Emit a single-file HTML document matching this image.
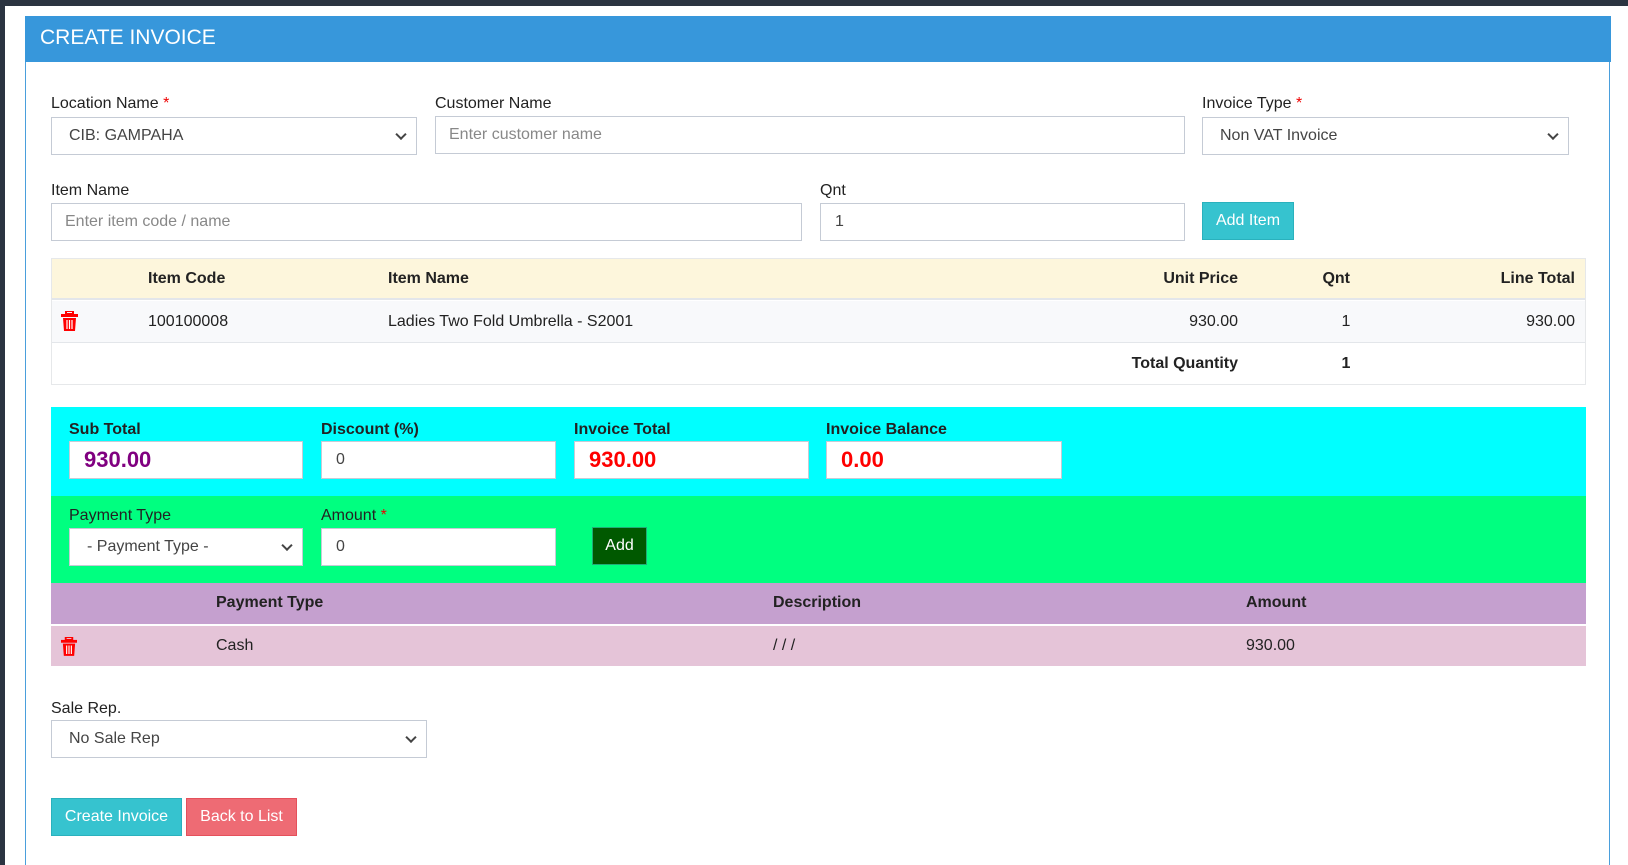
<!DOCTYPE html>
<html><head><meta charset="utf-8"><style>
*{box-sizing:border-box;margin:0;padding:0}
html{background:#fff;width:1628px;height:865px;overflow:hidden}
body{width:1628px;height:865px;background:#fff;font-family:"Liberation Sans",Arial,sans-serif;font-size:16px;color:#222;position:relative;overflow:hidden}
.a{position:absolute}
#topbar{left:0;top:0;width:1628px;height:6px;background:#2b3441}
#leftbar{left:0;top:0;width:5px;height:865px;background:#2b3441}
#panel{left:25px;top:16px;width:1585px;height:849px;border-left:1px solid #4a9fdc;border-right:1px solid #4a9fdc;background:#fff}
#hdr{left:25px;top:16px;width:1586px;height:46px;background:#3797db;color:#fff;font-size:21px;padding:10px 0 0 15px}
.lbl{font-size:16px;color:#222}
.req{color:#e00}
.inp{border:1px solid #c5cbd5;background:#fff;font-size:16px;color:#444;padding:0 0 0 17px;display:flex;align-items:center}
.ph{color:#888;padding-left:13px}
.sel::after{content:"";position:absolute;right:11px;top:50%;width:6px;height:6px;border-right:2px solid #444;border-bottom:2px solid #444;transform:translateY(-70%) rotate(45deg)}
.btn{color:#fff;display:flex;align-items:center;justify-content:center;font-size:16px}
.b{font-weight:bold}
.big{font-size:22px;font-weight:bold}
</style></head><body>
<div class="a" id="topbar"></div>
<div class="a" id="leftbar"></div>
<div class="a" id="panel"></div>
<div class="a" id="hdr">CREATE INVOICE</div>

<div class="a lbl" style="left:51px;top:95px">Location Name <span class="req">*</span></div>
<div class="a inp sel" style="left:51px;top:117px;width:366px;height:38px">CIB: GAMPAHA</div>
<div class="a lbl" style="left:435px;top:95px">Customer Name</div>
<div class="a inp ph" style="left:435px;top:116px;width:750px;height:38px">Enter customer name</div>
<div class="a lbl" style="left:1202px;top:95px">Invoice Type <span class="req">*</span></div>
<div class="a inp sel" style="left:1202px;top:117px;width:367px;height:38px">Non VAT Invoice</div>

<div class="a lbl" style="left:51px;top:182px">Item Name</div>
<div class="a inp ph" style="left:51px;top:203px;width:751px;height:38px">Enter item code / name</div>
<div class="a lbl" style="left:820px;top:182px">Qnt</div>
<div class="a inp" style="left:820px;top:203px;width:365px;height:38px;padding-left:14px">1</div>
<div class="a btn" style="left:1202px;top:202px;width:92px;height:38px;background:#36c3cf;border:1px solid #2ab1bd">Add Item</div>

<div class="a" style="left:51px;top:258px;width:1535px;height:127px;border:1px solid #e6e8ea"></div>
<div class="a" style="left:52px;top:259px;width:1533px;height:41px;background:#fdf6dc;border-bottom:2px solid #e3e6ea"></div>
<div class="a b" style="left:148px;top:270px">Item Code</div>
<div class="a b" style="left:388px;top:270px">Item Name</div>
<div class="a b" style="left:1138px;top:270px;width:100px;text-align:right">Unit Price</div>
<div class="a b" style="left:1300px;top:270px;width:50px;text-align:right">Qnt</div>
<div class="a b" style="left:1475px;top:270px;width:100px;text-align:right">Line Total</div>
<div class="a" style="left:52px;top:301px;width:1533px;height:42px;background:#f8f9fb;border-bottom:1px solid #e3e6ea"></div>
<svg class="a" style="left:61px;top:311px" width="17" height="20" viewBox="0 0 17 20"><rect x="5" y="0" width="7" height="3" fill="none" stroke="#f00" stroke-width="2"/><rect x="0" y="3" width="17" height="3" fill="#f00"/><path d="M2 7h13l-1 13H3z" fill="#f00"/><path d="M6 9v9M8.5 9v9M11 9v9" stroke="#fff" stroke-width="1.2"/></svg>
<div class="a" style="left:148px;top:313px">100100008</div>
<div class="a" style="left:388px;top:313px">Ladies Two Fold Umbrella - S2001</div>
<div class="a" style="left:1138px;top:313px;width:100px;text-align:right">930.00</div>
<div class="a" style="left:1326px;top:313px;width:40px;text-align:center">1</div>
<div class="a" style="left:1475px;top:313px;width:100px;text-align:right">930.00</div>
<div class="a b" style="left:1038px;top:355px;width:200px;text-align:right">Total Quantity</div>
<div class="a b" style="left:1326px;top:355px;width:40px;text-align:center">1</div>

<div class="a" style="left:51px;top:407px;width:1535px;height:89px;background:#00ffff"></div>
<div class="a b" style="left:69px;top:421px">Sub Total</div>
<div class="a b" style="left:321px;top:421px">Discount (%)</div>
<div class="a b" style="left:574px;top:421px">Invoice Total</div>
<div class="a b" style="left:826px;top:421px">Invoice Balance</div>
<div class="a inp big" style="left:69px;top:441px;width:234px;height:38px;color:#800080;padding-left:14px">930.00</div>
<div class="a inp" style="left:321px;top:441px;width:235px;height:38px;padding-left:14px">0</div>
<div class="a inp big" style="left:574px;top:441px;width:235px;height:38px;color:#f00;padding-left:14px">930.00</div>
<div class="a inp big" style="left:826px;top:441px;width:236px;height:38px;color:#f00;padding-left:14px">0.00</div>

<div class="a" style="left:51px;top:496px;width:1535px;height:87px;background:#00ff80"></div>
<div class="a lbl" style="left:69px;top:507px">Payment Type</div>
<div class="a lbl" style="left:321px;top:507px">Amount <span class="req">*</span></div>
<div class="a inp sel" style="left:69px;top:528px;width:234px;height:38px">- Payment Type -</div>
<div class="a inp" style="left:321px;top:528px;width:235px;height:38px;padding-left:14px">0</div>
<div class="a btn" style="left:592px;top:527px;width:55px;height:38px;background:#005900;border:1px solid #2a7">Add</div>

<div class="a" style="left:51px;top:583px;width:1535px;height:41px;background:#c5a0cf"></div>
<div class="a b" style="left:216px;top:594px">Payment Type</div>
<div class="a b" style="left:773px;top:594px">Description</div>
<div class="a b" style="left:1246px;top:594px">Amount</div>
<div class="a" style="left:51px;top:626px;width:1535px;height:40px;background:#e5c4d8"></div>
<svg class="a" style="left:61px;top:637px" width="16" height="19" viewBox="0 0 17 20"><rect x="5" y="0" width="7" height="3" fill="none" stroke="#f00" stroke-width="2"/><rect x="0" y="3" width="17" height="3" fill="#f00"/><path d="M2 7h13l-1 13H3z" fill="#f00"/><path d="M6 9v9M8.5 9v9M11 9v9" stroke="#fff" stroke-width="1.2"/></svg>
<div class="a" style="left:216px;top:637px">Cash</div>
<div class="a" style="left:773px;top:637px">/ / /</div>
<div class="a" style="left:1246px;top:637px">930.00</div>

<div class="a lbl" style="left:51px;top:700px">Sale Rep.</div>
<div class="a inp sel" style="left:51px;top:720px;width:376px;height:38px">No Sale Rep</div>

<div class="a btn" style="left:51px;top:798px;width:131px;height:38px;background:#36c3cf;border:1px solid #2ab1bd">Create Invoice</div>
<div class="a btn" style="left:186px;top:798px;width:111px;height:38px;background:#ee6b74;border:1px solid #e5505b">Back to List</div>
</body></html>
